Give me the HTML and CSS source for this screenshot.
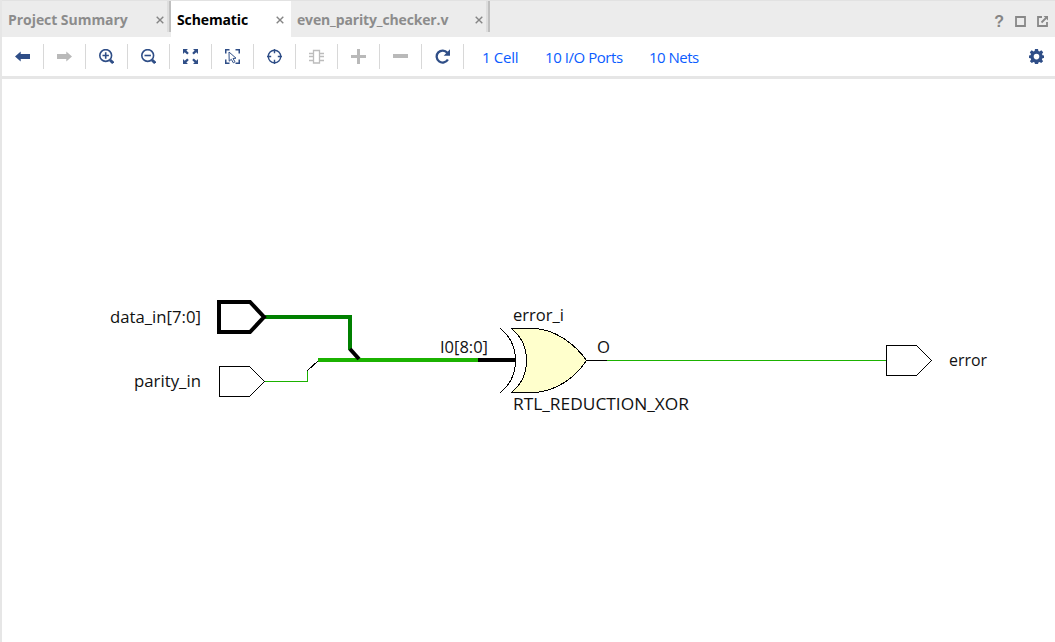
FILE: index.html
```html
<!DOCTYPE html>
<html lang="en">
<head>
<meta charset="utf-8">
<title>Schematic</title>
<link rel="stylesheet" href="styles.css">
</head>
<body>
<div class="panel">
  <header class="tabs">
    <div class="tab tab-summary"><span class="label l-summary">Project Summary</span><svg class="close" viewBox="0 0 8 8"><path d="M.7.7l6.600 6.600M7.300.7L.7 7.300"/></svg></div>
    <i class="split"></i>
    <div class="tab tab-schematic"><span class="label l-schematic">Schematic</span><svg class="close" viewBox="0 0 8 8"><path d="M.7.7l6.600 6.600M7.300.7L.7 7.300"/></svg></div>
    <div class="tab tab-source"><span class="label l-source">even_parity_checker.v</span><svg class="close" viewBox="0 0 8 8"><path d="M.7.7l6.600 6.600M7.300.7L.7 7.300"/></svg></div>
    <i class="split"></i>
    <div class="window-tools">
      <span class="help">?</span>
      <svg width="11" height="11" viewBox="0 0 11 11"><path d="M1 1h9v9H1z" class="gs"/></svg>
      <svg width="12" height="11" viewBox="0 0 12 11"><path d="M5 1H1v9h9V6M4.500 6.500L9 2" class="gs"/><path d="M6.500 0H11v4.500z" class="gf"/></svg>
    </div>
  </header>
  <nav class="toolbar">
    <div class="tool"><svg viewBox=".5 .5 15 15"><path class="nf" d="M.5 8l5.700-5v2.500H15.500v5H6.200V13z"/></svg></div>
    <div class="tool"><svg viewBox=".5 .5 15 15"><path class="df" d="M15.500 8L9.800 3v2.500H.5v5h9.300V13z"/></svg></div>
    <div class="tool"><svg viewBox=".5 .5 15 15"><circle class="ns" cx="7.200" cy="7" r="5.900"/><path class="ns" d="M4 7h6.400M7.200 3.800v6.400"/><path class="handle" d="M11.500 11.500l3.200 3"/></svg></div>
    <div class="tool"><svg viewBox=".5 .5 15 15"><circle class="ns" cx="7.200" cy="7" r="5.900"/><path class="ns" d="M4 7h6.400"/><path class="handle" d="M11.500 11.500l3.200 3"/></svg></div>
    <div class="tool"><svg viewBox=".5 .5 15 15"><path class="nf" d="M.5.500h5L3.900 2.100 6.300 4.500 4.700 6.100 2.200 3.700.5 5.400zM15.500.500h-5l1.600 1.600-2.400 2.400 1.600 1.600 2.500-2.400 1.700 1.700zM.5 15.500h5l-1.600-1.600 2.400-2.400-1.600-1.600-2.500 2.400-1.700-1.700zM15.500 15.500h-5l1.600-1.600-2.400-2.400 1.600-1.600 2.500 2.400 1.700-1.700z"/></svg></div>
    <div class="tool"><svg viewBox=".5 .5 15 15"><path class="ns" d="M1.200 5V1.200H5M11 1.200h3.800V5M1.200 11v3.800H5M11 14.800h3.800V11"/><path class="thin" d="M4.500 3.500l7 6.200-3 .3 2 3.300-1.700 1-2-3.500-2.100 1.900z"/></svg></div>
    <div class="tool"><svg viewBox=".5 .5 15 15"><circle class="target" cx="8" cy="8" r="6.200"/><path class="target" d="M8 .5v4.200M8 11.300v4.200M.5 8h4.200M11.300 8h4.200"/></svg></div>
    <div class="tool"><svg viewBox=".5 .5 15 15"><path class="chip" d="M5 2h6v12.500H5zM.5 5H5M.5 8H5M.5 12H5M11 5h4.500M11 8h4.500M11 12h4.500"/></svg></div>
    <div class="tool"><svg viewBox=".5 .5 15 15"><path class="df" d="M6.500.500h3v6h6v3h-6v6h-3v-6h-6v-3h6z"/></svg></div>
    <div class="tool"><svg viewBox=".5 .5 15 15"><path class="df" d="M.5 5.500h15v4H.5z"/></svg></div>
    <div class="tool"><svg viewBox=".5 .5 15 15"><path class="reload" d="M12.800 4.200A6 6 0 1 0 13.400 11"/><path class="nf" d="M15.500.800v6.400H9.200z"/></svg></div>
    <div class="links"><a class="a1">1 Cell</a><a class="a2">10 I/O Ports</a><a class="a3">10 Nets</a></div>
    <svg class="gear" viewBox=".5 .5 15 15"><path class="nf" fill-rule="evenodd" d="M6.500.500h3l.4 2 1.100.5 1.800-1.200 1.900 1.900L13.500 5.500l.5 1.200 1.700.2v2.500l-1.800.4-.5 1.200 1.200 1.700-1.900 1.900-1.700-1.200-1.100.5-.4 1.800h-3l-.4-1.800-1.100-.5-1.700 1.200-1.900-1.900 1.200-1.700-.5-1.200-1.800-.4V6.900l1.700-.2.5-1.200-1.200-1.800 1.900-1.900L5 3l1.100-.5zM8 5.300a2.800 2.800 0 1 0 0 5.600 2.800 2.800 0 0 0 0-5.600z"/></svg>
  </nav>
  <main class="canvas">
    <svg width="1053" height="563" viewBox="2 79 1053 563">
      <g class="wires" shape-rendering="crispEdges">
        <path class="bus dark" d="M265 317h85v33"/>
        <path class="bus green" d="M318 360h160"/>
        <path class="bus" d="M478 360h38"/>
        <path class="net green" d="M265 381.500h42.500V371M607 360.500h279"/>
        <path class="net" d="M307.500 370.500l11-10M586 360.500h21"/>
        <path class="port" d="M219.500 366.500h30l15 15-15 15h-30zM886.500 345.500h30l15 15-15 15h-30z"/>
      </g>
      <path class="bus" d="M350 349l9 10"/>
      <path class="bus" d="M219 302h31l14 15-14 15h-31z"/>
      <g shape-rendering="crispEdges">
        <path class="gate" d="M511.500 328.500H535C556 330 575 344 586.500 360.500 575 378 556 391 535 392.500H511.500C531.500 376 531.500 345 511.500 328.500z"/>
        <path class="net" d="M500.500 328.500C520.500 345 520.500 376 500.500 392.500"/>
      </g>
      <g class="names">
        <text x="110" y="323" textLength="91" lengthAdjust="spacingAndGlyphs">data_in[7:0]</text>
        <text x="134" y="387" textLength="67" lengthAdjust="spacingAndGlyphs">parity_in</text>
        <text x="440" y="353" textLength="48" lengthAdjust="spacingAndGlyphs">I0[8:0]</text>
        <text x="513" y="321" textLength="51" lengthAdjust="spacingAndGlyphs">error_i</text>
        <text x="597" y="353" textLength="13" lengthAdjust="spacingAndGlyphs">O</text>
        <text x="513" y="410" textLength="176" lengthAdjust="spacingAndGlyphs">RTL_REDUCTION_XOR</text>
        <text x="949" y="366" textLength="38" lengthAdjust="spacingAndGlyphs">error</text>
      </g>
    </svg>
  </main>
</div>
</body>
</html>
```
FILE: styles.css
```css
* { box-sizing: border-box; }
body { margin: 0; overflow: hidden; font-family: "Open Sans", "Noto Sans", sans-serif; background: #fff; }
.panel { height: 642px; border-left: 2px solid #e6e6e6; display: flex; flex-direction: column; }
.tabs { height: 37px; flex: none; display: flex; background: #ececec; border-top: 1px solid #e2e2e2; }
.tab { height: 36px; display: flex; align-items: center; justify-content: space-between; color: #8c8c8c; font-size: 14px; font-weight: 700; white-space: nowrap; }
.label { line-height: 20px; margin-top: 1px; }
.tab-summary { width: 165px; padding: 0 3px 0 6px; }
.tab-schematic { width: 120px; padding: 0 7px 0 6px; background: #fff; color: #000; }
.tab-source { width: 195px; padding: 0 3px 0 6px; }
.l-summary { letter-spacing: -0.05px; }
.l-schematic { letter-spacing: -0.12px; }
.l-source { letter-spacing: -0.15px; }
.close { width: 8px; height: 8px; margin-top: 2px; fill: none; stroke: #858585; stroke-width: 1.4; }
.split { width: 4px; height: 31px; border-left: 2px solid #dedede; border-right: 2px solid #bfbfbf; }
.window-tools { margin-left: auto; padding: 5px 6px 0 0; display: flex; align-items: center; gap: 11px; height: 36px; }
.window-tools .help { color: #858585; font: 700 16px/16px "Liberation Sans", sans-serif; }
.gs { fill: none; stroke: #888; stroke-width: 1.8; }
.gf { fill: #888; }
.toolbar { height: 42px; flex: none; border-bottom: 3px solid #e6e6e6; display: flex; align-items: center; }
.tool { width: 42px; height: 25px; border-right: 1px solid #d8d8d8; display: flex; align-items: center; justify-content: center; }
.tool svg, .gear { width: 15px; height: 15px; }
.nf { fill: #2f4e87; }
.df { fill: #b9b9b9; }
.ns { fill: none; stroke: #2f4e87; stroke-width: 1.6; }
.thin { fill: #fff; stroke: #2f4e87; stroke-width: 1; }
.handle { stroke: #2f4e87; stroke-width: 3; }
.target { fill: none; stroke: #2f4e87; stroke-width: 1.4; }
.chip { fill: none; stroke: #bcbcbc; stroke-width: 1.3; }
.reload { fill: none; stroke: #2f4e87; stroke-width: 2.3; }
.links { display: flex; padding-left: 18px; gap: 27px; color: #0b5cff; font-size: 15px; line-height: 22px; white-space: nowrap; }
.a1 { width: 36px; letter-spacing: -0.3px; }
.a2 { width: 77px; letter-spacing: -0.45px; }
.a3 { width: 50px; letter-spacing: -0.5px; }
.gear { margin: 0 11px 0 auto; }
.canvas { flex: 1; }
.canvas svg { display: block; }
.bus { fill: none; stroke: #000; stroke-width: 4; }
.net { fill: none; stroke: #000; stroke-width: 1; }
.dark { stroke: #008000; }
.green { stroke: #1bb200; }
.port { fill: #fff; stroke: #000; }
.gate { fill: #ffffcc; stroke: #000; }
.names { font-size: 17px; fill: #111; }
```
